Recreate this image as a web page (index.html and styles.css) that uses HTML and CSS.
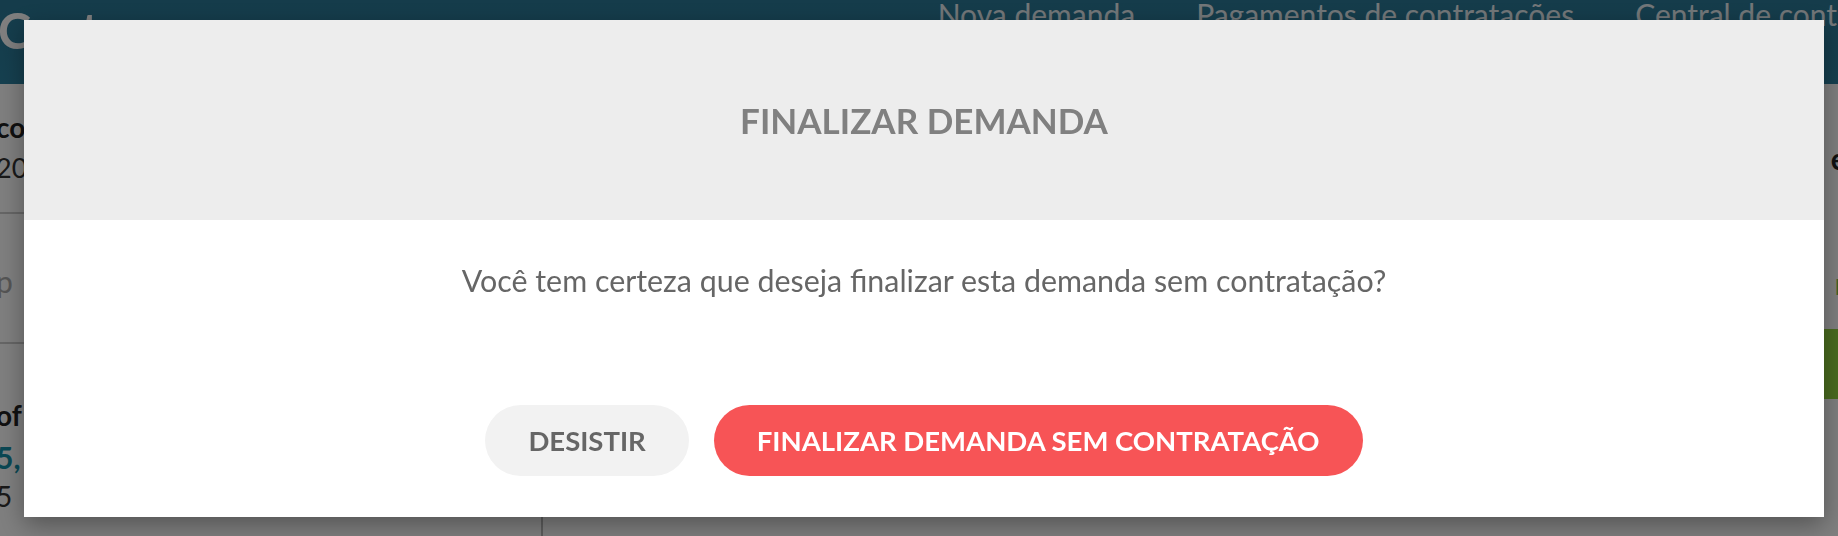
FILE: index.html
```html
<!DOCTYPE html>
<html lang="pt-BR">

<head>
    <meta charset="UTF-8">
    <meta name="viewport" content="width=device-width, initial-scale=1.0">
    <title>Finalizar demanda</title>
    <link rel="stylesheet" href="styles.css">
</head>

<body>
    <header class="topbar">
        <div class="brand">Custo</div>
        <nav class="topnav">
            <a href="#">Nova demanda</a>
            <a href="#">Pagamentos de contratações</a>
            <a href="#">Central de contratações</a>
        </nav>
    </header>

    <main class="page">
        <aside class="sidebar">
            <div class="side-block first">
                <div class="side-title">co</div>
                <div class="side-date">20</div>
            </div>
            <div class="side-block second">
                <div class="side-muted">p</div>
            </div>
            <div class="side-block third">
                <div class="side-title">of</div>
                <div class="side-price">5,</div>
                <div class="side-note">5</div>
            </div>
        </aside>
        <section class="content">
            <div class="content-head">es</div>
            <div class="content-link">ra</div>
            <div class="content-btn">o</div>
        </section>
    </main>

    <div class="overlay">
        <div class="modal">
            <div class="modal-header">
                <h2>FINALIZAR DEMANDA</h2>
            </div>
            <div class="modal-body">
                <p>Você tem certeza que deseja finalizar esta demanda sem contratação?</p>
                <div class="modal-actions">
                    <button type="button" class="btn btn-cancel">DESISTIR</button>
                    <button type="button" class="btn btn-danger">FINALIZAR DEMANDA SEM CONTRATAÇÃO</button>
                </div>
            </div>
        </div>
    </div>
</body>

</html>
```

FILE: styles.css
```css
body {
    margin: 0;
    font-family: Lato, "Open Sans", sans-serif;
    background-color: #ffffff;
    overflow: hidden;
    height: 536px;
}

/* page behind the dialog */
.topbar {
    height: 84px;
    background: linear-gradient(#2a7896, #2c80a0);
    display: flex;
    align-items: flex-start;
    justify-content: space-between;
    overflow: hidden;
}

.brand {
    color: #ffffff;
    font-size: 50px;
    font-weight: bold;
    margin-left: -2px;
    margin-top: 0;
    flex-shrink: 0;
}

.topnav {
    display: flex;
    gap: 61px;
    margin-top: -4px;
    margin-left: auto;
    margin-right: -110px;
    flex-shrink: 0;
}

.topnav a {
    color: #e6eef2;
    text-decoration: none;
    font-size: 30px;
    white-space: nowrap;
}

.page {
    display: flex;
    height: 452px;
}

.sidebar {
    width: 545px;
    border-right: 2px solid #bbbbbb;
    margin-left: -4px;
}

.side-block {
    border-bottom: 2px solid #cccccc;
}

.side-block.first {
    padding: 27px 0 28px;
}

.side-block.second {
    padding: 51px 0 45px;
}

.side-block.third {
    padding-top: 55px;
    border-bottom: none;
}

.side-title {
    font-size: 28px;
    line-height: 32px;
    font-weight: bold;
    color: #222222;
}

.side-date {
    font-size: 27px;
    line-height: 32px;
    color: #333333;
    margin-top: 9px;
}

.side-muted {
    font-size: 30px;
    line-height: 32px;
    color: #aaaaaa;
}

.side-price {
    font-size: 30px;
    line-height: 32px;
    font-weight: bold;
    color: #1590a8;
    margin-top: 10px;
}

.side-note {
    font-size: 28px;
    line-height: 32px;
    color: #333333;
    margin-top: 7px;
}

.content {
    flex: 1;
    text-align: right;
    margin-right: -22px;
}

.content-head {
    font-size: 30px;
    line-height: 34px;
    font-weight: bold;
    color: #222222;
    margin-top: 57px;
}

.content-link {
    font-size: 30px;
    line-height: 34px;
    color: #7fc04a;
    margin-top: 91px;
}

.content-btn {
    background-color: #94d640;
    color: #ffffff;
    font-size: 30px;
    font-weight: bold;
    height: 70px;
    line-height: 70px;
    margin-top: 29px;
    width: 180px;
    margin-left: auto;
}

/* dialog */
.overlay {
    position: fixed;
    inset: 0;
    background-color: rgba(0, 0, 0, 0.5);
    padding: 20px 14px 19px 24px;
    display: flex;
}

.modal {
    flex: 1;
    background-color: #ffffff;
    box-shadow: 0 8px 24px rgba(0, 0, 0, 0.35);
    display: flex;
    flex-direction: column;
    text-align: center;
}

.modal-header {
    height: 200px;
    background-color: #ededed;
    display: flex;
    align-items: center;
    justify-content: center;
}

.modal-header h2 {
    margin: 0;
    font-size: 35px;
    font-weight: bold;
    color: #808080;
}

.modal-body {
    padding-top: 42px;
}

.modal-body p {
    margin: 0;
    font-size: 30.4px;
    line-height: 36px;
    color: #666666;
}

.modal-actions {
    display: flex;
    justify-content: center;
    gap: 25px;
    margin-top: 107px;
}

.btn {
    height: 71px;
    border: none;
    border-radius: 36px;
    padding: 0 43px;
    font-family: Lato, "Open Sans", sans-serif;
    font-size: 27.5px;
    font-weight: bold;
}

.btn-cancel {
    background-color: #f2f2f2;
    color: #666666;
}

.btn-danger {
    background-color: #f75456;
    color: #ffffff;
}
```
